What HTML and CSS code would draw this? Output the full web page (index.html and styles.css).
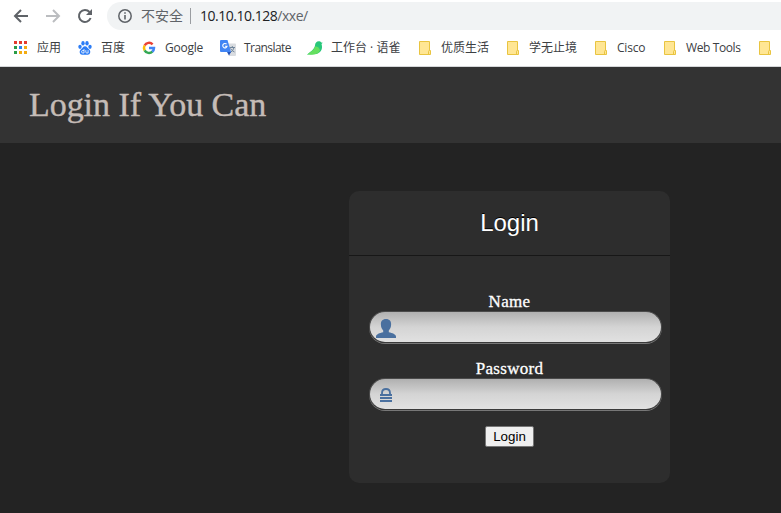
FILE: index.html
```html
<!DOCTYPE html>
<html lang="zh-CN">
<head>
<meta charset="utf-8">
<title>Login</title>
<link rel="stylesheet" href="styles.css">
</head>
<body>
<header class="browser">
  <div class="toolbar">
    <svg class="nav" viewBox="0 0 16 16"><path d="M15 8H2.5M8 2L2 8l6 6" fill="none" stroke="#5f6368" stroke-width="2"/></svg>
    <svg class="nav" viewBox="0 0 16 16"><path d="M1 8h12.5M8 2l6 6-6 6" fill="none" stroke="#bbbdc0" stroke-width="2"/></svg>
    <svg class="nav" viewBox="0 0 16 16"><path d="M13.6 10A6 6 0 1 1 12.5 4" fill="none" stroke="#5f6368" stroke-width="2"/><path d="M15 1v6H9z" fill="#5f6368"/></svg>
    <div class="address">
      <svg class="info" viewBox="0 0 14 14"><circle cx="7" cy="7" r="6.2" fill="none" stroke="#5f6368" stroke-width="1.5"/><path d="M6.2 6h1.6v4.5H6.2zM6.2 3.3h1.6v1.5H6.2z" fill="#5f6368"/></svg>
      <span class="insecure">不安全</span>
      <span class="divider"></span>
      <span class="url"><span class="host">10.10.10.128</span>/xxe/</span>
    </div>
  </div>
  <nav class="bookmarks">
    <a class="mark"><svg viewBox="0 0 16 16"><path fill="#e33b2e" d="M1 1h3v3H1zM6 1h3v3H6zM11 1h3v3h-3z"/><path fill="#299c46" d="M1 6h3v3H1zM1 11h3v3H1z"/><path fill="#2a85ee" d="M6 6h3v3H6z"/><path fill="#f3ac12" d="M11 6h3v3h-3zM6 11h3v3H6zM11 11h3v3h-3z"/></svg><span class="w24">应用</span></a>
    <a class="mark"><svg viewBox="0 0 16 16"><g fill="#2c7df6"><ellipse cx="3" cy="6.8" rx="1.7" ry="2.1"/><ellipse cx="6" cy="3.2" rx="1.7" ry="2.2"/><ellipse cx="10" cy="3.2" rx="1.7" ry="2.2"/><ellipse cx="13" cy="6.8" rx="1.7" ry="2.1"/><path d="M8 6.2c2 0 2.7 2 4.2 3.4 2 1.900 1 5.200-1.400 5.200H5.200c-2.500 0-3.400-3.300-1.400-5.200C5.300 8.200 6 6.200 8 6.200z"/></g><path d="M7 9v4H5.8a1.200 1.200 0 0 1 0-2.500H7M8.800 10.200V12q0 1 1 1h1.300v-2.800" fill="none" stroke="#fff" stroke-width=".8"/></svg><span class="w24">百度</span></a>
    <a class="mark"><svg viewBox="0 0 16 16"><g fill="none" stroke-width="2.5"><path d="M3.600 5.500A5 5 0 0 1 11.600 4.300" stroke="#ea4335"/><path d="M3.600 10.300A5 5 0 0 1 3.600 5.500" stroke="#fbbc05"/><path d="M11.400 11.600A5 5 0 0 1 3.600 10.300" stroke="#34a853"/><path d="M8 8h5a5 5 0 0 1-1.800 3.800" stroke="#4285f4"/></g></svg><span class="w39">Google</span></a>
    <a class="mark"><svg viewBox="0 0 16 16"><path d="M6 3.500h9q1 0 1 1v10.500q0 1-1 1H9z" fill="#d9dce0"/><path d="M9.500 7.500h5.500M12.300 6V7.500M14 7.700q-1 3.500-4 5M10.500 8.500q1.500 2.500 4 3.500" fill="none" stroke="#71869b"/><path d="M1 0h6.500L11 12H1q-1 0-1-1V1q0-1 1-1z" fill="#4285f4"/><path d="M7 12h4L9 15.500z" fill="#2453b8"/><path d="M6.600 4.200a2.200 2.200 0 1 0 .5 2H4.900" fill="none" stroke="#fff" stroke-width="1.1"/></svg><span class="w47">Translate</span></a>
    <a class="mark"><svg viewBox="0 0 16 16"><path d="M8 5.500C8 2.500 10 .8 12.500 1.200c.9.100 1.500.6 1.700 1.200l1.600.3-1.300 1.400c1.700 4.800-1 9-5 9.800L0 14.600C4 11.500 7.500 9 8 5.500z" fill="#28c77a"/><path d="M8 6.500C7 10 3.500 12 0 14.600c5 .3 12 .5 13-4.600C12 7 10 6 8 6.500z" fill="#65df5f"/></svg><span class="w70">工作台 · 语雀</span></a>
    <a class="mark"><svg viewBox="0 0 16 16"><use href="#folder"/></svg><span class="w48">优质生活</span></a>
    <a class="mark"><svg viewBox="0 0 16 16"><use href="#folder"/></svg><span class="w48">学无止境</span></a>
    <a class="mark"><svg viewBox="0 0 16 16"><use href="#folder"/></svg><span class="w29">Cisco</span></a>
    <a class="mark"><svg viewBox="0 0 16 16"><use href="#folder"/></svg><span class="w55">Web Tools</span></a>
    <a class="mark"><svg viewBox="0 0 16 16"><defs><g id="folder"><path d="M2.500 1.500h10v9h1v4h-11z" fill="#ffe694" stroke="#e9c440"/><path d="M11.500 14.500v-3q0-1 1-1" fill="none" stroke="#e9c440"/></g></defs><use href="#folder"/></svg></a>
  </nav>
</header>
<div class="banner"><h1>Login If You Can</h1></div>
<main>
  <form class="card">
    <h2>Login</h2>
    <div class="fields">
      <label for="name" class="name-label">Name</label>
      <div class="field"><svg viewBox="0 0 20 20"><path d="M10 1c3.600 0 5.300 2.300 5.100 5.500 0 2.800-1 4.500-2.300 6v1.700c3.500.8 7.200 2 7.200 4.300V20H0v-1.500c0-2.300 3.700-3.500 7.200-4.300v-1.700C5.900 11 4.900 9.300 4.900 6.500 4.700 3.300 6.400 1 10 1z" fill="#4a709f"/></svg><input id="name" type="text"></div>
      <label for="password" class="password-label">Password</label>
      <div class="field"><svg viewBox="0 0 20 20"><path d="M4 9h12v2H4zM4 12h12v2H4zM4 15h12v2H4z" fill="#4a709f"/><path d="M6 9.500V8q0-4 4-4t4 4v1.500" fill="none" stroke="#4a709f" stroke-width="1.800"/></svg><input id="password" type="password"></div>
      <button type="button">Login</button>
    </div>
  </form>
</main>
</body>
</html>
```
FILE: styles.css
```css
* { box-sizing: border-box; }
body { margin: 0; height: 513px; overflow: hidden; background: #232323; font-family: "Liberation Serif", serif; }
.browser { height: 67px; background: #fff; border-bottom: 1px solid #d5d7d9; font-family: "Open Sans", "Noto Sans CJK SC", sans-serif; overflow: hidden; }
.toolbar { display: flex; align-items: center; gap: 16px; height: 32px; padding-left: 13px; }
.nav { width: 16px; height: 16px; flex: none; }
.address { display: flex; align-items: center; flex: 1; height: 28px; margin-left: -2px; padding-left: 11px; background: #f1f3f4; border-radius: 14px 0 0 14px; font-size: 14px; line-height: 20px; color: #5f6368; white-space: nowrap; }
.info { width: 14px; height: 14px; margin-right: 9px; }
.insecure { width: 42px; }
.divider { width: 1px; height: 16px; margin: 0 9px 0 7px; background: #9a9da1; }
.url { letter-spacing: -0.48px; }
.host { color: #202124; }
.bookmarks { display: flex; gap: 16px; height: 32px; padding-left: 13px; align-items: center; }
.mark { display: flex; align-items: center; gap: 8px; flex: none; font-size: 12px; line-height: 16px; color: #3c4043; white-space: nowrap; }
.mark svg { width: 16px; height: 16px; flex: none; }
.w24 { width: 24px; }
.w29 { width: 29px; letter-spacing: -0.2px; }
.w39 { width: 39px; letter-spacing: -0.25px; }
.w47 { width: 47px; letter-spacing: -0.55px; }
.w48 { width: 48px; }
.w55 { width: 55px; letter-spacing: -0.4px; }
.w70 { width: 70px; }
.banner { display: flex; align-items: center; height: 76px; padding-left: 29px; background: #333; }
h1 { margin: 0; font-size: 34px; line-height: 40px; font-weight: 400; letter-spacing: -0.05px; color: #c5bcb7; -webkit-text-stroke: 0.4px #c5bcb7; white-space: nowrap; }
main { padding: 48px 0 0 349px; }
.card { width: 321px; height: 292px; background: #2d2d2d; border-radius: 10px; }
h2 { margin: 0; height: 65px; border-bottom: 1px solid #171717; font: 400 24px/64px "Liberation Sans", sans-serif; text-align: center; color: #fff; text-shadow: 0 -1px 0 #000; }
.fields { display: flex; flex-direction: column; align-items: center; padding-top: 36px; }
label { height: 19px; font-size: 17px; line-height: 20px; color: #fff; -webkit-text-stroke: 0.3px #fff; }
.name-label { letter-spacing: 0.3px; }
.password-label { letter-spacing: 0.3px; }
.field { display: flex; align-items: center; width: 293px; height: 32px; margin: 0 -2px 16px 10px; padding: 2px 0 0 6px; border: 1px solid #4b4b4b; border-bottom-color: #3a3a3a; border-radius: 16px; background: linear-gradient(#b0b0b0, #d4d4d4 50%, #e1e1e1); box-shadow: 0 1px 0 #777; }
.field svg { width: 20px; height: 20px; flex: none; }
.field input { flex: 1; min-width: 0; height: 28px; border: 0; outline: 0; background: transparent; }
button { width: 49px; height: 21px; padding: 0; border: 1px solid #767676; border-radius: 2px; background: #efefef; color: #000; font: 13.333px/19px "Liberation Sans", sans-serif; }
```
